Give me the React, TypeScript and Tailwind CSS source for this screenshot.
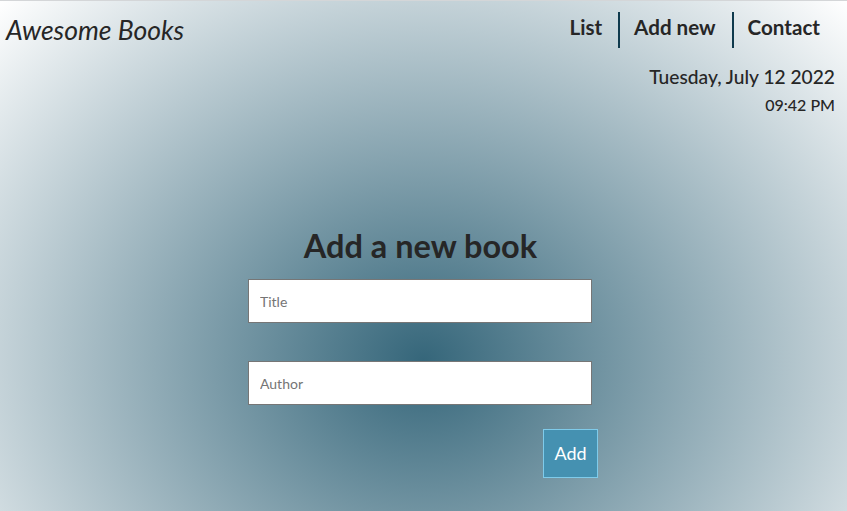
import React from "react"

const navItems = ["List", "Add new", "Contact"]

export default function App() {
  return (
    <div
      className="min-h-screen border-t border-[#d4d6d8] text-[#262626] bg-[radial-gradient(ellipse_598px_509px_at_50%_360px,#35667a,#ffffff)]"
      style={{ fontFamily: "Lato, 'Open Sans', sans-serif" }}
    >
      <header className="flex justify-between pl-[6px] pr-[11px] pt-[11px]">
        <h1 className="text-[26.5px] italic leading-[36px]">Awesome Books</h1>
        <div className="flex flex-col items-end">
          <nav className="flex">
            {navItems.map((item, index) => (
              <a
                key={item}
                href="#"
                className={
                  index === 0
                    ? "flex h-[36px] items-center px-4 pb-[5px] text-[20.6px] font-bold"
                    : "flex h-[36px] items-center border-l-2 border-[#0f3a4d] pl-[14px] pr-4 pb-[5px] text-[20.6px] font-bold"
                }
              >
                {item}
              </a>
            ))}
          </nav>
          <p className="mt-[16px] mr-[1px] text-[19.2px] font-medium leading-[26px]">Tuesday, July 12 2022</p>
          <p className="mt-[4px] mr-[1px] text-[16px] font-medium leading-[22px]">09:42 PM</p>
        </div>
      </header>

      <main className="flex flex-col items-center pt-[110px]">
        <h2 className="mr-[6px] text-[32.5px] font-bold leading-[40px]">Add a new book</h2>
        <form className="mt-[13px] mr-[1px] flex w-[350px] flex-col">
          <input
            type="text"
            placeholder="Title"
            className="h-[44px] w-[344px] border border-[#767676] bg-white px-[11px] text-[14px] placeholder:text-[#757575] outline-none"
          />
          <input
            type="text"
            placeholder="Author"
            className="mt-[38px] h-[44px] w-[344px] border border-[#767676] bg-white px-[11px] text-[14px] placeholder:text-[#757575] outline-none"
          />
          <button
            type="button"
            className="mt-[24px] h-[49px] w-[55px] self-end border border-[#7fcbea] bg-[#4591b1] text-[18px] text-white"
          >
            Add
          </button>
        </form>
      </main>
    </div>
  )
}
